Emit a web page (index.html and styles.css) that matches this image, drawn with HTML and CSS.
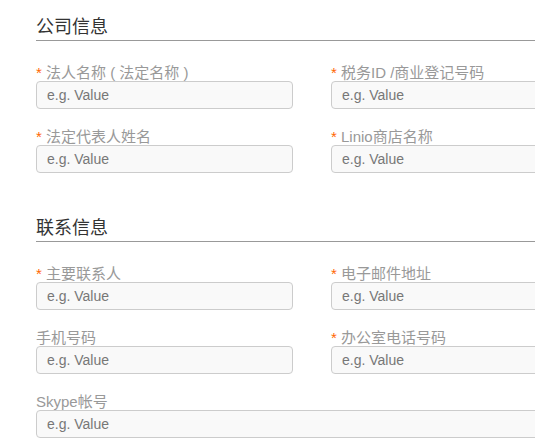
FILE: index.html
```html
<!DOCTYPE html>
<html lang="zh-CN">
<head>
    <meta charset="UTF-8">
    <meta name="viewport" content="width=device-width, initial-scale=1.0">
    <title>商家信息</title>
    <link rel="stylesheet" href="styles.css">
</head>
<body>
    <div class="form">
        <!-- Company info -->
        <h2 class="section-title">公司信息</h2>
        <div class="fields">
            <div class="field">
                <label><span class="req">*</span> 法人名称 ( 法定名称 )</label>
                <input type="text" placeholder="e.g. Value">
            </div>
            <div class="field">
                <label><span class="req">*</span> 税务ID /商业登记号码</label>
                <input type="text" placeholder="e.g. Value">
            </div>
            <div class="field">
                <label><span class="req">*</span> 法定代表人姓名</label>
                <input type="text" placeholder="e.g. Value">
            </div>
            <div class="field">
                <label><span class="req">*</span> Linio商店名称</label>
                <input type="text" placeholder="e.g. Value">
            </div>
        </div>

        <!-- Contact info -->
        <h2 class="section-title">联系信息</h2>
        <div class="fields">
            <div class="field">
                <label><span class="req">*</span> 主要联系人</label>
                <input type="text" placeholder="e.g. Value">
            </div>
            <div class="field">
                <label><span class="req">*</span> 电子邮件地址</label>
                <input type="text" placeholder="e.g. Value">
            </div>
            <div class="field">
                <label>手机号码</label>
                <input type="text" placeholder="e.g. Value">
            </div>
            <div class="field">
                <label><span class="req">*</span> 办公室电话号码</label>
                <input type="text" placeholder="e.g. Value">
            </div>
            <div class="field wide">
                <label>Skype帐号</label>
                <input type="text" placeholder="e.g. Value">
            </div>
        </div>
    </div>
</body>
</html>
```

FILE: styles.css
```css
body {
    margin: 0;
    font-family: "Liberation Sans", Arial, "Noto Sans CJK SC", sans-serif;
    background-color: #fff;
    color: #333;
}

.form {
    width: 552px;
    padding: 17px 0 0 36px;
}

.section-title {
    font-size: 18px;
    font-weight: normal;
    line-height: 20px;
    margin: 0;
    padding-bottom: 3px;
    border-bottom: 1px solid #999;
    color: #333;
}

.fields {
    display: grid;
    grid-template-columns: 257px 257px;
    column-gap: 38px;
    row-gap: 20px;
    margin: 24px 0 45px;
}

.field.wide {
    grid-column: 1 / 3;
}

label {
    display: block;
    font-size: 15px;
    line-height: 16px;
    color: #999;
}

.req {
    color: #f60;
}

input {
    display: block;
    width: 100%;
    height: 28px;
    box-sizing: border-box;
    padding: 0 10px;
    border: 1px solid #ccc;
    border-radius: 4px;
    background-color: #f9f9f9;
    font-family: inherit;
    font-size: 14px;
    color: #555;
}

input::placeholder {
    color: #777;
}
```
